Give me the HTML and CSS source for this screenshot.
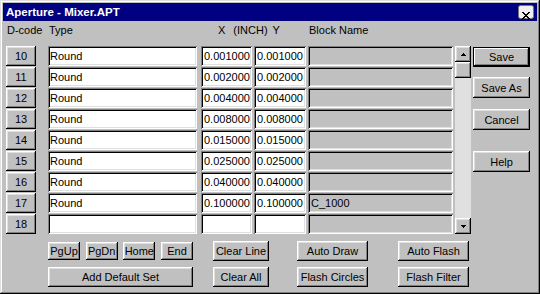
FILE: index.html
```html
<!DOCTYPE html>
<html>
<head>
<meta charset="utf-8">
<title>Aperture - Mixer.APT</title>
<link rel="stylesheet" href="styles.css">
</head>
<body>
<div class="window">
  <div class="titlebar">
    <span class="title">Aperture - Mixer.APT</span>
    <button class="close" aria-label="Close"><svg width="8" height="7" viewBox="0 0 8 7" shape-rendering="crispEdges"><path d="M0 0h2v1H0zM6 0h2v1H6zM1 1h2v1H1zM5 1h2v1H5zM2 2h4v1H2zM3 3h2v1H3zM2 4h4v1H2zM1 5h2v1H1zM5 5h2v1H5zM0 6h2v1H0zM6 6h2v1H6z" fill="#000"/></svg></button>
  </div>
  <div class="content">
    <div class="header">
      <span class="h-dcode">D-code</span>
      <span class="h-type">Type</span>
      <span class="h-xy"><span>X</span><span class="h-inch">(INCH)</span><span class="h-y">Y</span></span>
      <span class="h-block">Block Name</span>
    </div>
    <div class="middle">
      <div class="table">
        <button class="btn dbtn">10</button><div class="field type">Round</div><div class="field num">0.001000</div><div class="field num y">0.001000</div><div class="field block"></div>
        <button class="btn dbtn">11</button><div class="field type">Round</div><div class="field num">0.002000</div><div class="field num y">0.002000</div><div class="field block"></div>
        <button class="btn dbtn">12</button><div class="field type">Round</div><div class="field num">0.004000</div><div class="field num y">0.004000</div><div class="field block"></div>
        <button class="btn dbtn">13</button><div class="field type">Round</div><div class="field num">0.008000</div><div class="field num y">0.008000</div><div class="field block"></div>
        <button class="btn dbtn">14</button><div class="field type">Round</div><div class="field num">0.015000</div><div class="field num y">0.015000</div><div class="field block"></div>
        <button class="btn dbtn">15</button><div class="field type">Round</div><div class="field num">0.025000</div><div class="field num y">0.025000</div><div class="field block"></div>
        <button class="btn dbtn">16</button><div class="field type">Round</div><div class="field num">0.040000</div><div class="field num y">0.040000</div><div class="field block"></div>
        <button class="btn dbtn">17</button><div class="field type">Round</div><div class="field num">0.100000</div><div class="field num y">0.100000</div><div class="field block">C_1000</div>
        <button class="btn dbtn">18</button><div class="field type"></div><div class="field num"></div><div class="field num y"></div><div class="field block"></div>
      </div>
      <div class="scrollbar">
        <button class="btn sbtn" aria-label="Scroll up"><svg width="5" height="3" viewBox="0 0 5 3" shape-rendering="crispEdges"><path d="M2 0h1v1H2zM1 1h3v1H1zM0 2h5v1H0z" fill="#000"/></svg></button>
        <div class="btn thumb"></div>
        <div class="track"></div>
        <button class="btn sbtn" aria-label="Scroll down"><svg width="5" height="3" viewBox="0 0 5 3" shape-rendering="crispEdges"><path d="M0 0h5v1H0zM1 1h3v1H1zM2 2h1v1H2z" fill="#000"/></svg></button>
      </div>
      <div class="side">
        <button class="btn default save">Save</button>
        <button class="btn saveas">Save As</button>
        <button class="btn cancel">Cancel</button>
        <button class="btn help">Help</button>
      </div>
    </div>
    <div class="bottom">
      <div class="nav">
        <div class="navrow">
          <button class="btn nbtn">PgUp</button>
          <button class="btn nbtn">PgDn</button>
          <button class="btn nbtn">Home</button>
          <button class="btn nbtn">End</button>
        </div>
        <button class="btn wide">Add Default Set</button>
      </div>
      <div class="col col-clear">
        <button class="btn">Clear Line</button>
        <button class="btn">Clear All</button>
      </div>
      <div class="col col-draw">
        <button class="btn">Auto Draw</button>
        <button class="btn">Flash Circles</button>
      </div>
      <div class="col col-flash">
        <button class="btn">Auto Flash</button>
        <button class="btn">Flash Filter</button>
      </div>
    </div>
  </div>
</div>
</body>
</html>
```

FILE: styles.css
```css
* {
  box-sizing: border-box;
  margin: 0;
  padding: 0;
}

html, body {
  width: 540px;
  height: 294px;
  overflow: hidden;
  background: #c0c0c0;
}

body {
  font-family: "Liberation Sans", Arial, sans-serif;
  font-size: 11px;
  color: #000;
}

.window {
  width: 540px;
  height: 294px;
  background: #c0c0c0;
  padding: 3px;
  box-shadow: inset -1px -1px #000, inset 1px 1px #dfdfdf, inset -2px -2px #808080, inset 2px 2px #fff;
  display: flex;
  flex-direction: column;
}

.titlebar {
  height: 18px;
  background: #000080;
  color: #fff;
  display: flex;
  align-items: center;
  padding: 0 3px 0 3px;
}

.title {
  flex: 1;
  font-weight: bold;
  font-size: 11.5px;
  white-space: nowrap;
}

.btn {
  background: #c0c0c0;
  border: none;
  font: inherit;
  color: #000;
  display: flex;
  align-items: center;
  justify-content: center;
  white-space: nowrap;
  box-shadow: inset -1px -1px #000, inset 1px 1px #fff, inset -2px -2px #808080, inset 2px 2px #dfdfdf;
}

.close {
  width: 16px;
  height: 14px;
  padding-bottom: 1px;
}

.content {
  padding: 0 0 0 3px;
  display: flex;
  flex-direction: column;
}

.header {
  margin-top: 3px;
  height: 13px;
  line-height: 13px;
  margin-bottom: 9px;
  display: grid;
  grid-template-columns: 42px 153px 107px 145px;
}

.header > span {
  padding-left: 1px;
  white-space: nowrap;
}

.header .h-xy {
  padding-left: 17px;
  display: flex;
}

.h-inch {
  margin-left: 8px;
}

.h-y {
  margin-left: 5px;
}

.middle {
  display: flex;
  align-items: flex-start;
}

.table {
  display: grid;
  grid-template-columns: 42px 153px 53px 54px 145px;
  grid-auto-rows: 20px;
  row-gap: 1px;
}

.dbtn {
  width: 30px;
  height: 20px;
}

.field {
  background: #fff;
  height: 20px;
  line-height: 20px;
  padding: 0 2px;
  white-space: nowrap;
  overflow: hidden;
  box-shadow: inset 1px 1px #808080, inset -1px -1px #fff, inset 2px 2px #000, inset -2px -2px #dfdfdf;
}

.field.type {
  width: 149px;
}

.field.num {
  width: 51px;
  padding: 0 1px 0 3px;
}

.field.num.y {
  width: 52px;
}

.field.block {
  width: 145px;
  background: #c0c0c0;
  padding-left: 3px;
}

.scrollbar {
  margin-left: 2px;
  width: 16px;
  height: 188px;
  background: #e0e0e0;
  display: flex;
  flex-direction: column;
}

.sbtn,
.thumb {
  width: 16px;
  height: 16px;
  flex: none;
}

.track {
  flex: 1;
}

.side {
  margin-left: 2px;
  width: 57px;
  display: flex;
  flex-direction: column;
}

.side .btn {
  width: 57px;
  height: 21px;
}

.btn.default {
  box-shadow: inset 0 0 0 1px #000, inset -2px -2px #000, inset 2px 2px #fff, inset -3px -3px #808080;
}

.side .save {
  margin-top: 1px;
  height: 20px;
}

.side .saveas {
  margin-top: 10px;
}

.side .cancel {
  margin-top: 11px;
}

.side .help {
  margin-top: 21px;
}

.bottom {
  margin-top: 7px;
  display: flex;
  align-items: flex-start;
}

.nav {
  margin-left: 42px;
  width: 145px;
  display: flex;
  flex-direction: column;
}

.navrow {
  margin-top: 1px;
  display: flex;
  justify-content: space-between;
}

.nbtn {
  width: 32px;
  height: 18px;
}

.wide {
  margin-top: 7px;
  width: 145px;
  height: 20px;
}

.col {
  display: flex;
  flex-direction: column;
  row-gap: 6px;
}

.col .btn {
  height: 20px;
}

.col-clear {
  margin-left: 20px;
  width: 56px;
}

.col-draw {
  margin-left: 28px;
  width: 71px;
}

.col-flash {
  margin-left: 30px;
  width: 71px;
}
```
